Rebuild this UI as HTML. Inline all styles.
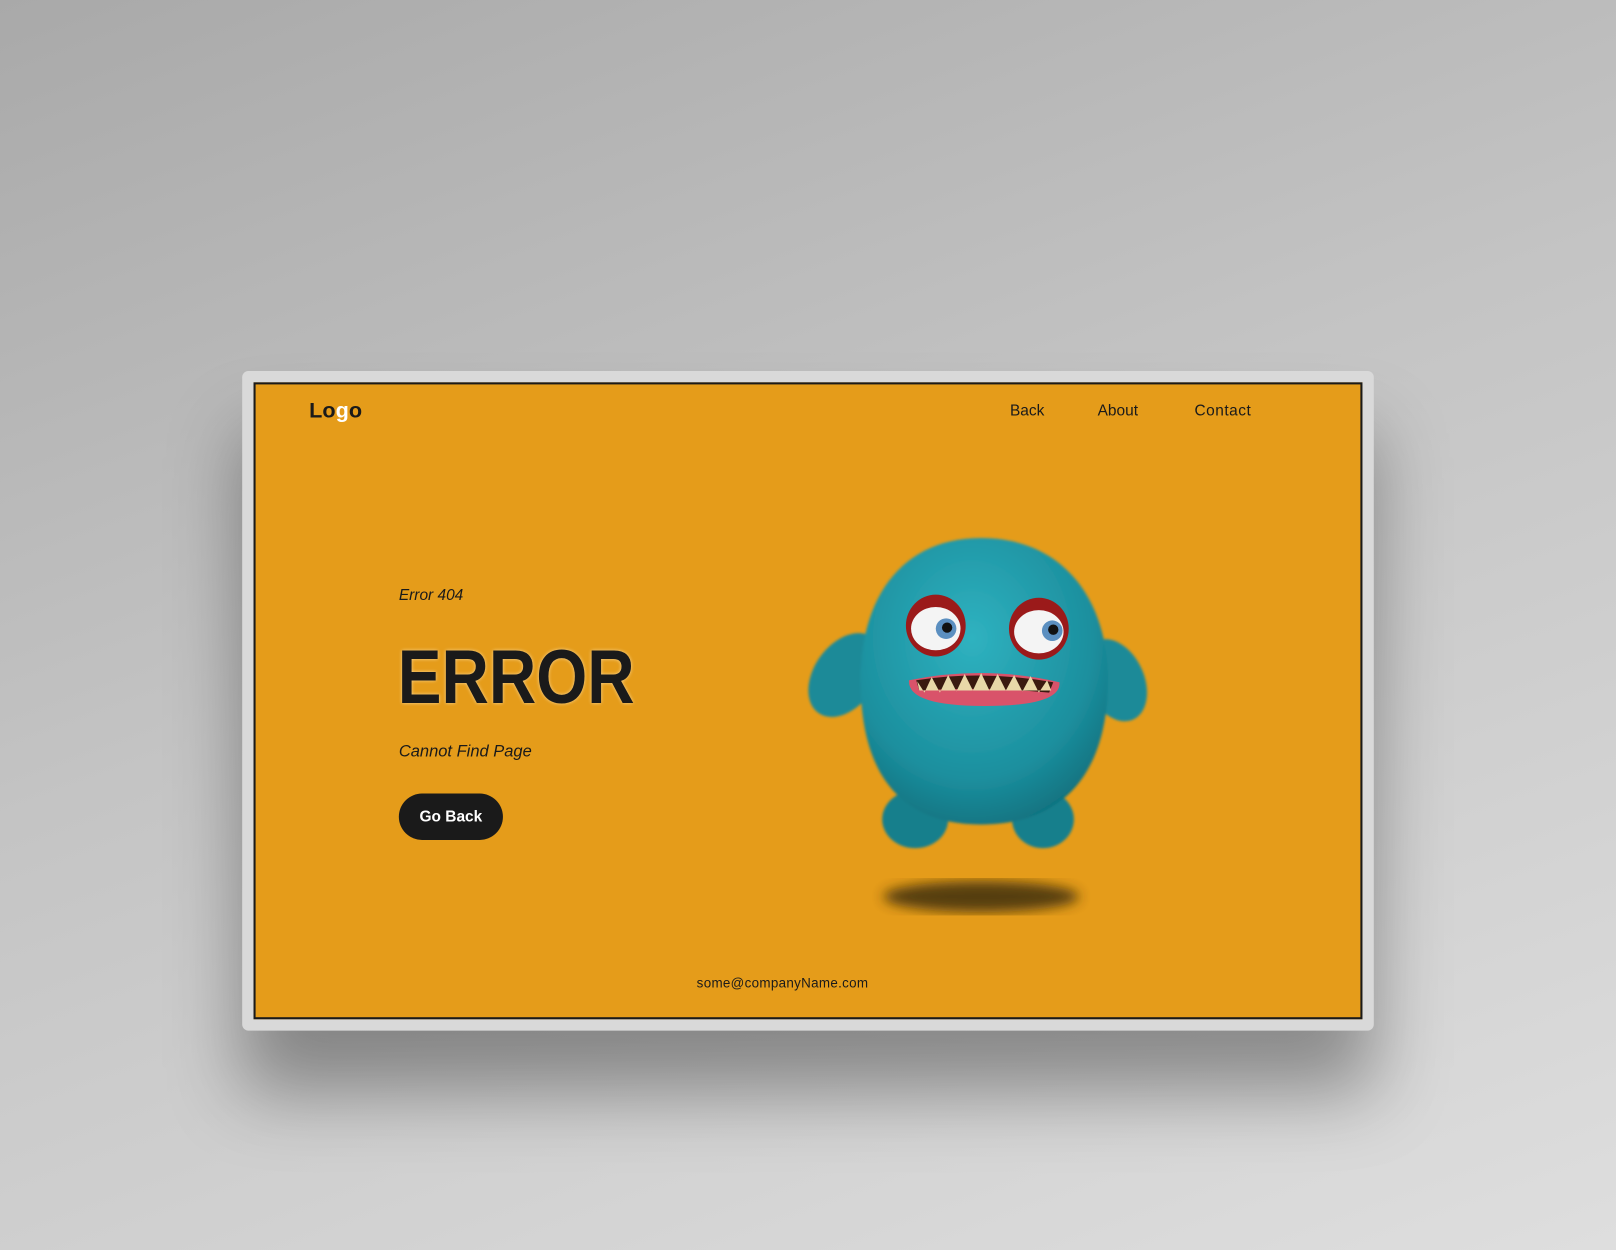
<!DOCTYPE html>
<html><head><meta charset="utf-8"><style>
html,body{margin:0;padding:0;width:1616px;height:1250px;overflow:hidden}
body{background:linear-gradient(160deg,#a9a9a9 0%,#c4c4c4 45%,#dedede 100%);font-family:"Liberation Sans",sans-serif}
#w{position:absolute;left:0;top:0;width:1568px;height:1213px;transform:scale(1.0306);transform-origin:0 0}
.frame{position:absolute;left:235px;top:360px;width:1098px;height:640px;background:#d9d9d9;border-radius:6px;box-shadow:0 60px 70px rgba(0,0,0,.35)}
.card{position:absolute;left:246px;top:371px;width:1072px;height:614px;background:#e59c1a;border:2px solid #1a1a1a}
.t{position:absolute;color:#1a1a1a;white-space:nowrap}
</style></head><body><div id="w">
<div class="frame"></div>
<div class="card"></div>
<div class="t" style="left:300px;top:387px;font-size:21px;font-weight:bold">Lo<span style="color:#fff">g</span>o</div>
<div class="t" style="left:980px;top:390px;font-size:15px">Back</div>
<div class="t" style="left:1065px;top:390px;font-size:15px">About</div>
<div class="t" style="left:1159px;top:390px;font-size:15px;letter-spacing:0.5px">Contact</div>
<div class="t" style="left:387px;top:569px;font-size:15px;font-style:italic">Error 404</div>
<div class="t" style="left:386px;top:614px;font-size:74px;font-weight:bold;transform:scaleX(0.86);transform-origin:0 0;text-shadow:0 0 4px rgba(255,230,180,.8)">ERROR</div>
<div class="t" style="left:387px;top:721px;font-size:16px;font-style:italic">Cannot Find Page</div>
<div style="position:absolute;left:387px;top:770px;width:101px;height:45px;border-radius:23px;background:#1a1a1a;color:#fff;font-size:15px;font-weight:bold;line-height:45px;text-align:center">Go Back</div>
<div class="t" style="left:676px;top:946px;font-size:13px;letter-spacing:0.3px">some@companyName.com</div>
<svg style="position:absolute;left:770px;top:510px" width="360" height="390" viewBox="770 510 360 390">
<defs>
<radialGradient id="b" cx="0.45" cy="0.35" r="0.7"><stop offset="0" stop-color="#2fb2c0"/><stop offset="0.7" stop-color="#1c8f9e"/><stop offset="1" stop-color="#0f6f7c"/></radialGradient>
<filter id="bl"><feGaussianBlur stdDeviation="6"/></filter>
<filter id="f"><feGaussianBlur stdDeviation="1.2"/></filter>
</defs>
<ellipse cx="952" cy="870" rx="95" ry="15" fill="#3e2e10" opacity=".85" filter="url(#bl)"/>
<g filter="url(#f)">
<ellipse cx="820" cy="655" rx="30" ry="45" transform="rotate(35 820 655)" fill="#1a8a98"/>
<ellipse cx="1082" cy="660" rx="28" ry="42" transform="rotate(-25 1082 660)" fill="#1a8a98"/>
<ellipse cx="888" cy="795" rx="32" ry="28" fill="#167f8c"/>
<ellipse cx="1012" cy="795" rx="30" ry="28" fill="#167f8c"/>
<path d="M952 522 C1030 522 1075 580 1075 660 C1075 740 1040 800 952 800 C865 800 835 740 835 660 C835 580 875 522 952 522Z" fill="url(#b)"/>
</g>
<ellipse cx="908" cy="607" rx="29" ry="30" fill="#9b1a1a"/>
<ellipse cx="1008" cy="610" rx="29" ry="30" fill="#9b1a1a"/>
<ellipse cx="908" cy="610" rx="24" ry="21" fill="#f4f4f4"/>
<ellipse cx="1008" cy="613" rx="24" ry="21" fill="#f4f4f4"/>
<circle cx="918" cy="610" r="10" fill="#5b8fc0"/><circle cx="919" cy="609" r="5" fill="#111"/>
<circle cx="1021" cy="612" r="10" fill="#5b8fc0"/><circle cx="1022" cy="611" r="5" fill="#111"/>
<path d="M882 660 Q955 645 1028 662 Q1030 685 955 685 Q880 685 882 660Z" fill="#d9536a"/>
<path d="M889 660 Q955 650 1022 662 L1018 672 Q955 666 892 670Z" fill="#3a1a10"/>
<path d="M890 661 L897 672 L904 657 L912 672 L920 655 L928 671 L936 654 L944 670 L952 653 L960 670 L968 654 L976 670 L984 655 L992 671 L1000 656 L1008 672 L1016 660 L1020 670 L892 670Z" fill="#e8d8a8"/>
</svg>
</div></body></html>
